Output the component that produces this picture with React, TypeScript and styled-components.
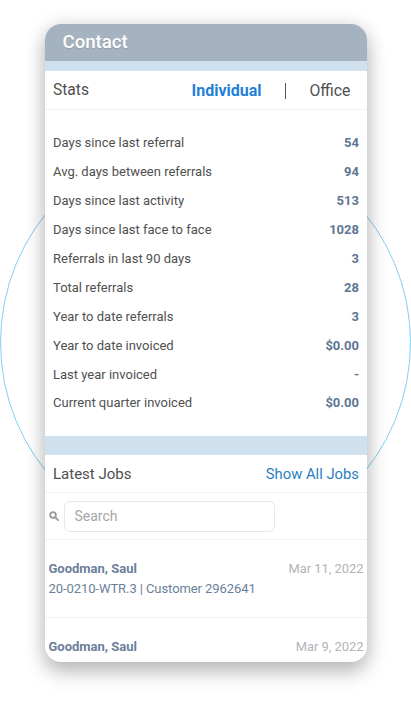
import { createGlobalStyle, styled } from "styled-components";

const GlobalStyle = createGlobalStyle`
    html, body {
        margin: 0;
        padding: 0;
        background: #fff;
        font-family: Roboto, "Liberation Sans", sans-serif;
    }
`;

const Page = styled.div`
    position: relative;
    width: 411px;
    height: 710px;
    padding-top: 24px;
    box-sizing: border-box;
    overflow: hidden;
`;

const Circle = styled.div`
    position: absolute;
    left: 0;
    top: 137px;
    width: 411px;
    height: 411px;
    box-sizing: border-box;
    border: 1px solid #7fd0f8;
    border-radius: 50%;
`;

const Card = styled.div`
    position: relative;
    width: 322px;
    height: 638px;
    margin: 0 auto;
    background: #fff;
    border-radius: 16px;
    overflow: hidden;
    box-shadow: 0 10px 20px rgba(0, 0, 0, 0.25), 0 0 20px rgba(0, 0, 0, 0.1);
`;

const TitleBar = styled.div`
    height: 37px;
    padding-left: 18px;
    background: #a5b3c0;
    color: #fff;
    font-size: 18.6px;
    font-weight: 500;
    line-height: 36px;
    text-shadow: 0 1px 1px rgba(0, 0, 0, 0.12);
`;

const Band = styled.div<{ $height: number }>`
    height: ${({ $height }) => $height}px;
    background: #cfe0ee;
`;

const Row = styled.div<{ $height: number }>`
    display: flex;
    align-items: center;
    justify-content: space-between;
    height: ${({ $height }) => $height}px;
    box-sizing: border-box;
    padding: 0 7.5px 0 8.5px;
    border-bottom: 1px solid #f1f2f3;
`;

const Heading = styled.span`
    font-size: 15px;
    color: #505050;
`;

const StatsHeading = styled(Heading)`
    font-size: 15.6px;
`;

const Tabs = styled.div`
    display: flex;
    align-items: center;
    padding-right: 8.5px;
    font-size: 15.8px;
    color: #505050;
`;

const ActiveTab = styled.span`
    color: #1f7fd8;
    font-weight: 700;
    font-size: 16px;
`;

const Separator = styled.span`
    width: 1px;
    height: 16px;
    margin: 2px 24px 0 23px;
    background: #555;
`;

const StatList = styled.div`
    display: flex;
    flex-direction: column;
    height: 326px;
    box-sizing: border-box;
    padding: 18.5px 7.5px 0 8.5px;
`;

const StatRow = styled.div`
    display: flex;
    align-items: center;
    justify-content: space-between;
    height: 28.9px;
    font-size: 13px;
    color: #505050;
`;

const StatValue = styled.span`
    font-weight: 700;
    color: #5f7694;
`;

const ShowAll = styled.a`
    font-size: 14.8px;
    color: #2a7fc4;
`;

const SearchRow = styled.div`
    display: flex;
    align-items: center;
    height: 47px;
    box-sizing: border-box;
    padding: 0 0 0 4px;
    gap: 5px;
    border-bottom: 1px solid #f1f2f3;
`;

const SearchBox = styled.div`
    width: 211px;
    height: 31px;
    box-sizing: border-box;
    padding-left: 10px;
    border: 1px solid #e3e8ea;
    border-radius: 6px;
    font-size: 14px;
    line-height: 29px;
    color: #a6a6a6;
`;

const SearchIcon = styled.svg`
    width: 10px;
    height: 10px;
`;

const Job = styled.div<{ $last?: boolean }>`
    height: ${({ $last }) => ($last ? "auto" : "78px")};
    box-sizing: border-box;
    padding: 19px 3px 0 4px;
    border-bottom: ${({ $last }) => ($last ? "none" : "1px solid #f1f2f3")};
`;

const JobTop = styled.div`
    display: flex;
    justify-content: space-between;
    align-items: center;
    height: 18px;
`;

const JobName = styled.span`
    font-size: 13px;
    font-weight: 700;
    color: #6b7f99;
`;

const JobDate = styled.span`
    font-size: 12.9px;
    color: #b0b4b8;
`;

const JobRef = styled.div`
    margin-top: 3px;
    font-size: 13px;
    line-height: 18px;
    letter-spacing: -0.08px;
    color: #6b7f99;
`;

const stats: [string, string][] = [
    ["Days since last referral", "54"],
    ["Avg. days between referrals", "94"],
    ["Days since last activity", "513"],
    ["Days since last face to face", "1028"],
    ["Referrals in last 90 days", "3"],
    ["Total referrals", "28"],
    ["Year to date referrals", "3"],
    ["Year to date invoiced", "$0.00"],
    ["Last year invoiced", "-"],
    ["Current quarter invoiced", "$0.00"],
];

const App = () => {
    return (
        <Page>
            <GlobalStyle />
            <Circle />
            <Card>
                <TitleBar>Contact</TitleBar>
                <Band $height={10} />
                <Row $height={39}>
                    <StatsHeading>Stats</StatsHeading>
                    <Tabs>
                        <ActiveTab>Individual</ActiveTab>
                        <Separator />
                        <span>Office</span>
                    </Tabs>
                </Row>
                <StatList>
                    {stats.map(([label, value]) => (
                        <StatRow key={label}>
                            <span>{label}</span>
                            <StatValue>{value}</StatValue>
                        </StatRow>
                    ))}
                </StatList>
                <Band $height={19} />
                <Row $height={38}>
                    <Heading>Latest Jobs</Heading>
                    <ShowAll>Show All Jobs</ShowAll>
                </Row>
                <SearchRow>
                    <SearchIcon viewBox="0 0 12 12" fill="none" stroke="#9a9a9a" strokeWidth="2.2">
                        <circle cx="4.8" cy="4.8" r="3.4" />
                        <path d="M7.5 7.5 11 11" strokeLinecap="round" />
                    </SearchIcon>
                    <SearchBox>Search</SearchBox>
                </SearchRow>
                <Job>
                    <JobTop>
                        <JobName>Goodman, Saul</JobName>
                        <JobDate>Mar 11, 2022</JobDate>
                    </JobTop>
                    <JobRef>20-0210-WTR.3 | Customer 2962641</JobRef>
                </Job>
                <Job $last>
                    <JobTop>
                        <JobName>Goodman, Saul</JobName>
                        <JobDate>Mar 9, 2022</JobDate>
                    </JobTop>
                    <JobRef>20-0210-WTR.3 | Customer 2962641</JobRef>
                </Job>
            </Card>
        </Page>
    );
};

export default App;
